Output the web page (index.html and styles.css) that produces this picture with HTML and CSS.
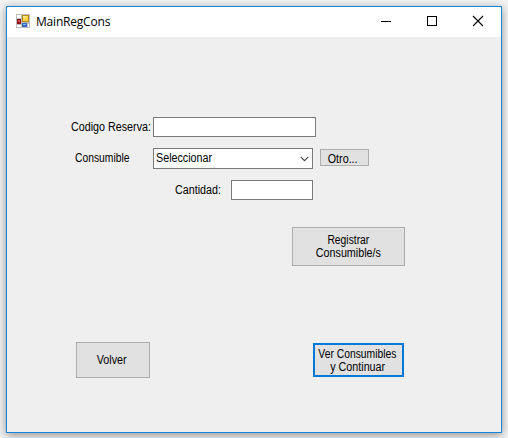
FILE: index.html
```html
<!DOCTYPE html>
<html lang="es">
<head>
<meta charset="utf-8">
<title>MainRegCons</title>
<link rel="stylesheet" href="styles.css">
</head>
<body>
<main class="window">
  <header class="titlebar">
    <svg class="app-icon" width="14" height="14" viewBox="0 0 14 14" shape-rendering="crispEdges">
      <rect width="14" height="14" fill="#bdbdbd"/>
      <path fill="#fff" d="M1 1h4v3H1zM1 11h4v2H1zM12 10h1v3h-1z"/>
      <rect x="6" y="1" width="7" height="7" fill="#b98a10"/>
      <rect x="7" y="2" width="5" height="5" fill="#ffd34d"/>
      <rect x="7" y="2" width="3" height="2" fill="#ffe591"/>
      <rect x="1" y="5" width="4" height="5" fill="#8d1717"/>
      <rect x="2" y="6" width="2" height="2" fill="#d34b42"/>
      <rect x="6" y="9" width="5" height="4" fill="#3169c6"/>
      <rect x="7" y="10" width="3" height="1" fill="#83b4fa"/>
    </svg>
    <h1 class="title">MainRegCons</h1>
    <div class="controls">
      <svg class="control" width="46" height="30" viewBox="0 0 46 30" shape-rendering="crispEdges"><path d="M18 14.5h10" stroke="#000"/></svg>
      <svg class="control" width="46" height="30" viewBox="0 0 46 30" shape-rendering="crispEdges"><path d="M18.500 9.500h9v9h-9z" fill="none" stroke="#000"/></svg>
      <svg class="control" width="46" height="30" viewBox="0 0 46 30"><path d="M18 9l10 10M28 9L18 19" stroke="#000" stroke-width="1.100"/></svg>
    </div>
  </header>
  <form class="form">
    <div class="row row-code">
      <label class="label label-code" for="code"><span class="text">Codigo Reserva:</span></label>
      <input class="field field-code" id="code" type="text">
    </div>
    <div class="row row-item">
      <span class="label label-item"><span class="text text-tight">Consumible</span></span>
      <div class="field combo">
        <span class="text">Seleccionar</span>
        <svg width="9" height="6" viewBox="0 0 9 6"><path d="M.7.8l3.800 3.800L8.300.8" fill="none" stroke="#444" stroke-width="1.100"/></svg>
      </div>
      <button class="button other" type="button"><span class="text">Otro...</span></button>
    </div>
    <div class="row row-qty">
      <label class="label label-qty" for="qty"><span class="text">Cantidad:</span></label>
      <input class="field field-qty" id="qty" type="text">
    </div>
    <button class="button register" type="button"><span class="text text-tight">Registrar</span><span class="text">Consumible/s</span></button>
    <footer class="actions">
      <button class="button back" type="button"><span class="text">Volver</span></button>
      <button class="button continue" type="button"><span class="text text-tight">Ver Consumibles</span><span class="text">y Continuar</span></button>
    </footer>
  </form>
</main>
</body>
</html>
```
FILE: styles.css
```css
* { box-sizing: border-box; }

body {
  margin: 0;
  height: 438px;
  padding: 6px;
  overflow: hidden;
  background: #f4f4f4;
  font: 12px/13px "Liberation Sans", Arial, sans-serif;
  color: #000;
}

.window {
  width: 496px;
  height: 427px;
  border: 1px solid #1883d7;
  background: #efefef;
  box-shadow: 0 2px 9px rgba(0, 0, 0, .42);
}

.titlebar {
  display: flex;
  height: 30px;
  padding-left: 9px;
  background: #fff;
}

.app-icon { margin-top: 7px; }

.title {
  margin: 0 0 0 6px;
  font: 12px/29px "Open Sans", sans-serif;
  letter-spacing: -0.2px;
}

.controls { display: flex; margin-left: auto; }
.control { display: block; }

.form { padding-top: 80px; }
.row { display: flex; align-items: flex-start; }
.row-item { margin-top: 11px; }
.row-qty { margin-top: 11px; }

/* Narrow lettering for the form controls */
.text {
  display: inline-block;
  transform: scaleX(.895);
  transform-origin: left center;
}

.text-tight { transform: scaleX(.86); }

.label { flex: none; white-space: nowrap; padding-top: 4px; }
.label-code { width: 146px; padding-left: 64px; }
.label-item { width: 146px; padding-left: 68px; }
.label-qty { width: 224px; padding-left: 168px; }

.field {
  height: 20px;
  margin: 0;
  padding: 0 2px;
  border: 1px solid #7a7a7a;
  border-radius: 0;
  background: #fff;
  font: inherit;
  outline: 0;
}

.field-code { width: 163px; }
.field-qty { width: 82px; }

.combo {
  display: flex;
  width: 160px;
  height: 21px;
  align-items: center;
  justify-content: space-between;
  padding-right: 3px;
}

.button {
  display: flex;
  flex-direction: column;
  align-items: center;
  justify-content: center;
  margin: 0;
  padding: 0;
  border: 1px solid #adadad;
  border-radius: 0;
  background: #e1e1e1;
  color: #000;
  font: inherit;
  white-space: nowrap;
}

.button .text { transform-origin: center; }

.other { width: 49px; height: 17px; margin: 1px 0 0 7px; padding: 3px 3px 0 0; }
.register { width: 113px; height: 39px; margin: 27px 0 0 285px; padding-right: 1px; }
.actions { display: flex; align-items: center; margin-top: 76px; padding-left: 69px; }
.back { width: 74px; height: 36px; padding-right: 2px; }
.continue { width: 91px; height: 34px; margin-left: 163px; padding: 1px 2px 0 0; border: 2px solid #0078d7; }
```
